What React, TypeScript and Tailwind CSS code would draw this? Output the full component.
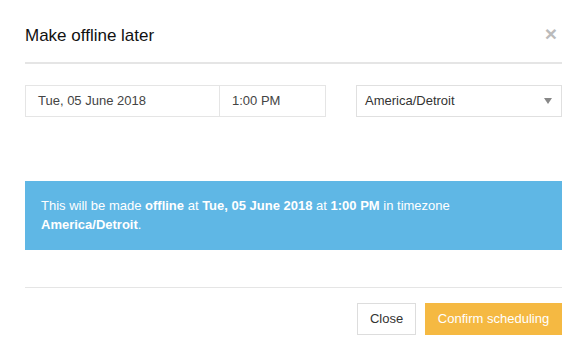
export default function App() {
  return (
    <div
      className="w-[587px] h-[361px] bg-white px-[25px] text-[#333]"
      style={{ fontFamily: '"Liberation Sans", Arial, sans-serif' }}
    >
      {/* Header */}
      <div className="relative flex h-[64px] items-center border-b-2 border-[#e5e5e5] pt-[10px]">
        <h4 className="text-[17px] leading-[20px] text-[#111]">Make offline later</h4>
        <button className="absolute right-[5px] top-[23px] text-[21px] font-bold leading-none text-[#bbb]">
          ×
        </button>
      </div>

      {/* Inputs */}
      <div className="mt-[21px] flex">
        <div className="flex h-[32px] w-[195px] items-center border border-[#e5e5e5] px-[12px] text-[13px] text-[#444]">
          Tue, 05 June 2018
        </div>
        <div className="-ml-px flex h-[32px] w-[107px] items-center border border-[#e5e5e5] px-[12px] text-[13px] text-[#444]">
          1:00 PM
        </div>
        <div className="ml-[30px] flex h-[32px] flex-1 items-center justify-between border border-[#e0e0e0] pl-[8px] pr-[9px] text-[13px] text-[#333]">
          <span>America/Detroit</span>
          <span className="h-0 w-0 border-x-[4px] border-t-[6px] border-x-transparent border-t-[#888]" />
        </div>
      </div>

      {/* Info box */}
      <div className="mt-[64px] h-[69px] bg-[#5fb7e5] px-[16px] pt-[15px] text-[13px] leading-[19px] text-white">
        This will be made <b>offline</b> at <b>Tue, 05 June 2018</b> at <b>1:00 PM</b> in timezone{" "}
        <b>America/Detroit</b>.
      </div>

      {/* Footer */}
      <div className="mt-[37px] flex justify-end gap-[9px] border-t border-[#e5e5e5] pt-[15px]">
        <button className="h-[32px] w-[59px] border border-[#ddd] text-[13px] text-[#333]">Close</button>
        <button className="h-[32px] w-[137px] bg-[#f5b942] text-[13px] text-white">Confirm scheduling</button>
      </div>
    </div>
  );
}
